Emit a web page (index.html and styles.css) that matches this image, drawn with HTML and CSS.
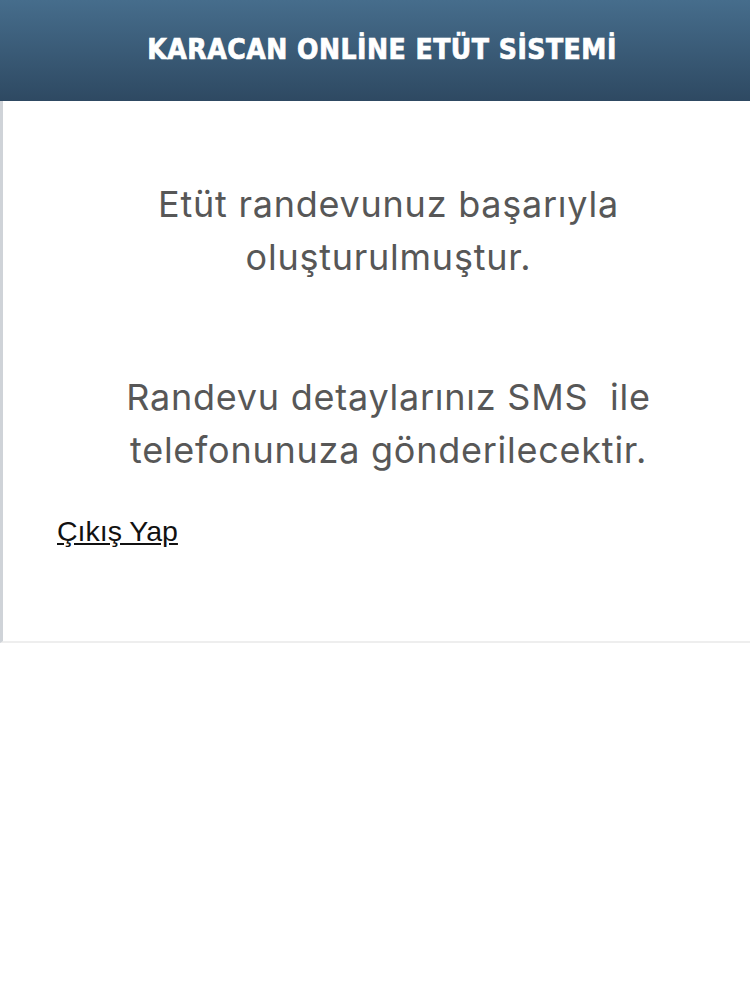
FILE: index.html
```html
<!DOCTYPE html>
<html lang="tr">
<head>
    <meta charset="UTF-8">
    <meta name="viewport" content="width=device-width, initial-scale=1.0">
    <title>Karacan Online Etüt Sistemi</title>
    <link rel="stylesheet" href="styles.css">
</head>
<body>

    <div class="header">
        <h1>KARACAN ONLİNE ETÜT SİSTEMİ</h1>
    </div>

    <div class="container">
        <p class="message">Etüt randevunuz başarıyla<br>oluşturulmuştur.</p>
        <p class="message second">Randevu detaylarınız SMS&nbsp; ile<br>telefonunuza gönderilecektir.</p>
        <a href="#" class="logout">Çıkış Yap</a>
    </div>

</body>
</html>
```

FILE: styles.css
```css
body {
    margin: 0;
    background-color: #fff;
    font-family: Inter, "Liberation Sans", sans-serif;
}
.header {
    height: 101px;
    padding-left: 14px;
    box-sizing: border-box;
    background: linear-gradient(#466d8c, #2e4962);
    display: flex;
    align-items: center;
    justify-content: center;
}
.header h1 {
    margin: 0 0 2px 0;
    color: #fff;
    font-family: "DejaVu Sans Condensed", "DejaVu Sans", sans-serif;
    font-weight: bold;
    font-size: 28px;
    letter-spacing: 0.5px;
    -webkit-text-stroke: 0.7px #fff;
}
.container {
    border-left: 3px solid #cfd3d8;
    border-bottom: 2px solid #eeeeee;
    padding: 77px 0 0 54px;
    box-sizing: border-box;
    height: 542px;
}
.message {
    margin: 0 0 0 -30px;
    text-align: center;
    color: #575757;
    font-size: 36px;
    letter-spacing: 0.75px;
    line-height: 53px;
}
.second {
    margin-top: 87px;
}
.logout {
    display: inline-block;
    margin-top: 38px;
    color: #111;
    font-family: "Liberation Sans", Arial, sans-serif;
    font-size: 28.5px;
}
```
